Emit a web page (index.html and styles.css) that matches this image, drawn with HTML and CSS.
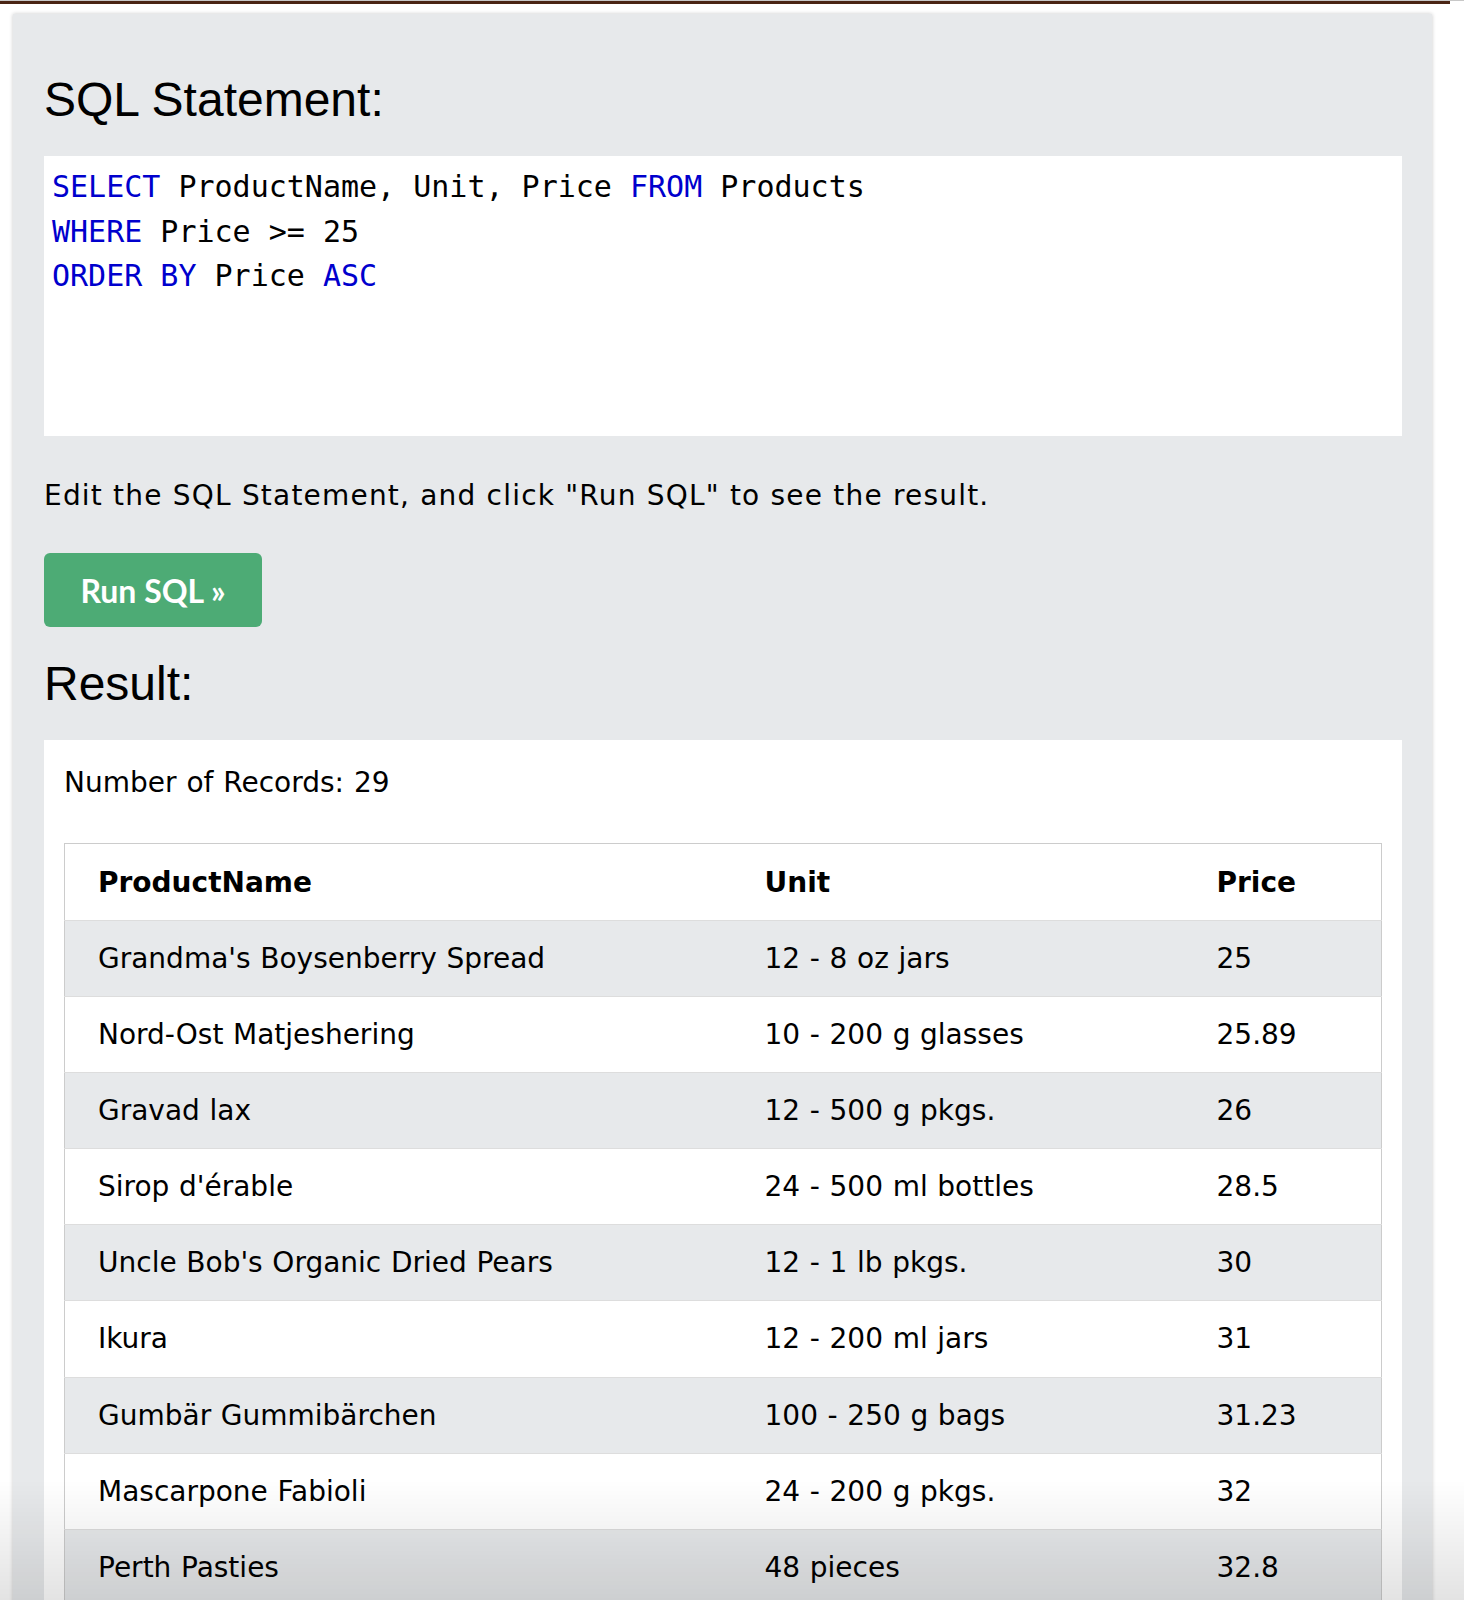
FILE: index.html
```html
<!DOCTYPE html>
<html lang="en">
<head>
<meta charset="utf-8">
<title>SQL Tryit</title>
<link rel="stylesheet" href="styles.css">
</head>
<body>
<div class="topbar"><div class="topbar-line"></div></div>
<div class="panel">
  <h2 class="title">SQL Statement:</h2>
  <div class="code">
    <div class="code-line"><span class="kw">SELECT</span> ProductName, Unit, Price <span class="kw">FROM</span> Products</div>
    <div class="code-line"><span class="kw">WHERE</span> Price &gt;= 25</div>
    <div class="code-line"><span class="kw">ORDER BY</span> Price <span class="kw">ASC</span></div>
  </div>
  <p class="hint">Edit the SQL Statement, and click "Run SQL" to see the result.</p>
  <button class="run">Run SQL »</button>
  <h2 class="title result-title">Result:</h2>
  <div class="result">
    <div class="count">Number of Records: 29</div>
    <table class="grid">
      <colgroup><col class="c1"><col class="c2"><col class="c3"></colgroup>
      <thead>
        <tr><th>ProductName</th><th>Unit</th><th>Price</th></tr>
      </thead>
      <tbody>
        <tr><td>Grandma's Boysenberry Spread</td><td>12 - 8 oz jars</td><td>25</td></tr>
        <tr><td>Nord-Ost Matjeshering</td><td>10 - 200 g glasses</td><td>25.89</td></tr>
        <tr><td>Gravad lax</td><td>12 - 500 g pkgs.</td><td>26</td></tr>
        <tr><td>Sirop d'érable</td><td>24 - 500 ml bottles</td><td>28.5</td></tr>
        <tr><td>Uncle Bob's Organic Dried Pears</td><td>12 - 1 lb pkgs.</td><td>30</td></tr>
        <tr><td>Ikura</td><td>12 - 200 ml jars</td><td>31</td></tr>
        <tr><td>Gumbär Gummibärchen</td><td>100 - 250 g bags</td><td>31.23</td></tr>
        <tr><td>Mascarpone Fabioli</td><td>24 - 200 g pkgs.</td><td>32</td></tr>
        <tr><td>Perth Pasties</td><td>48 pieces</td><td>32.8</td></tr>
      </tbody>
    </table>
  </div>
</div>
<div class="bottom-fade"></div>
</body>
</html>
```

FILE: styles.css
```css
html, body {
  margin: 0;
  padding: 0;
  background: #ffffff;
}

body {
  font-family: "DejaVu Sans", Verdana, sans-serif;
  color: #000;
}

.topbar {
  height: 4px;
  border-top: 1px solid #c8c8c8;
  box-sizing: border-box;
}

.topbar-line {
  width: 1450px;
  height: 3px;
  background: #4a2414;
}

.panel {
  width: 1419px;
  box-sizing: border-box;
  margin: 10px 0 0 13px;
  padding: 58px 30px 40px 31px;
  background: #e7e9eb;
  box-shadow: 0 0 4px rgba(0, 0, 0, 0.22);
}

.title {
  margin: 0;
  font-family: "Liberation Sans", Arial, sans-serif;
  font-weight: 400;
  font-size: 48px;
  line-height: 56px;
}

.code {
  margin-top: 28px;
  height: 280px;
  box-sizing: border-box;
  background: #fff;
  padding: 9px 8px;
  font-family: "DejaVu Sans Mono", monospace;
  font-size: 30px;
  line-height: 44.5px;
  color: #000;
}

.kw {
  color: #0000cd;
}

.hint {
  margin: 39px 0 0;
  font-size: 28px;
  line-height: 42px;
  letter-spacing: 1.2px;
}

.run {
  display: block;
  margin-top: 36px;
  height: 74px;
  width: 218px;
  padding: 0;
  border: 0;
  border-radius: 6px;
  background: #4dab75;
  color: #fff;
  font-family: Lato, "Open Sans", sans-serif;
  font-weight: 700;
  font-size: 32px;
}

.result-title {
  margin-top: 29px;
}

.result {
  margin-top: 28px;
  background: #fff;
  padding: 22px 20px 20px 20px;
}

.count {
  font-size: 28px;
  line-height: 42px;
  word-spacing: 1px;
}

.grid {
  margin-top: 39px;
  width: 100%;
  border-collapse: collapse;
  border: 1px solid #cccccc;
  font-size: 28px;
  table-layout: fixed;
  word-spacing: 0.75px;
}

.c1 { width: 685px; }
.c2 { width: 452px; }

.grid th,
.grid td {
  text-align: left;
  padding: 16px 15px;
  line-height: 43.1px;
  border-bottom: 1px solid #dddddd;
  white-space: nowrap;
}

.grid th {
  font-weight: 700;
  padding-top: 18px;
  line-height: 42px;
}

.grid th:first-child,
.grid td:first-child {
  padding-left: 33px;
}

.grid tbody tr:nth-child(odd) {
  background: #e7e9eb;
}

.bottom-fade {
  position: fixed;
  left: 0;
  right: 0;
  bottom: 0;
  height: 120px;
  background: linear-gradient(to bottom, rgba(0, 0, 0, 0), rgba(0, 0, 0, 0.11));
  pointer-events: none;
}
```
